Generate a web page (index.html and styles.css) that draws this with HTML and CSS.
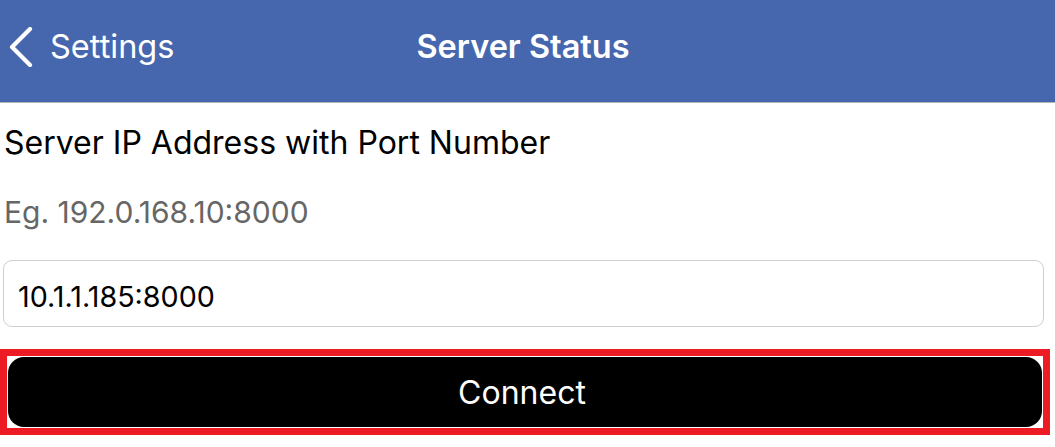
FILE: index.html
```html
<!DOCTYPE html>
<html>
<head>
<meta charset="utf-8">
<link rel="stylesheet" href="styles.css">
</head>
<body>
<header class="navbar">
  <div class="nav-back">
    <svg class="chev" width="26" height="40" viewBox="0 0 26 40"><path d="M22 2 L4 20 L22 38" fill="none" stroke="#fff" stroke-width="4.2" stroke-linecap="round" stroke-linejoin="round"/></svg>
    <span class="back-label">Settings</span>
  </div>
  <div class="nav-title">Server Status</div>
</header>
<main class="content">
  <div class="label">Server IP Address with Port Number</div>
  <div class="hint">Eg. 192.0.168.10:8000</div>
  <div class="field">10.1.1.185:8000</div>
  <div class="highlight">
    <button class="connect">Connect</button>
  </div>
</main>
</body>
</html>
```
FILE: styles.css
```css
html, body {
  margin: 0;
  padding: 0;
  background: #fff;
  font-family: Inter, "Noto Sans", "Liberation Sans", sans-serif;
}
.navbar {
  position: relative;
  height: 102px;
  background: #4666ad;
  border-bottom: 1px solid #b5b5b5;
  display: flex;
  align-items: center;
  justify-content: center;
}
.nav-back {
  position: absolute;
  left: 8px;
  top: 0;
  bottom: 9px;
  display: flex;
  align-items: center;
  color: #fff;
}
.chev {
  display: block;
  margin-right: 16px;
}
.back-label {
  font-size: 32.5px;
  font-weight: 400;
}
.nav-title {
  color: #fff;
  font-size: 32.5px;
  font-weight: 600;
  margin-bottom: 9px;
  margin-right: 9px;
}
.label {
  margin: 20px 0 0 4px;
  font-size: 32px;
  color: #000;
  line-height: 40px;
}
.hint {
  margin: 31px 0 0 4px;
  font-size: 30px;
  color: #666;
  line-height: 36px;
}
.field {
  margin: 30px 11px 0 3px;
  border: 1px solid #cfcfcf;
  border-radius: 9px;
  box-sizing: border-box;
  height: 67px;
  display: flex;
  align-items: center;
  padding: 6px 0 0 14px;
  font-size: 28.7px;
  color: #000;
}
.highlight {
  margin-top: 22px;
  width: 1050px;
  box-sizing: border-box;
  border: 7px solid #ed1c24;
  padding: 1px;
}
.connect {
  display: block;
  width: 100%;
  height: 70px;
  background: #000;
  color: #fff;
  border: none;
  border-radius: 16px;
  font-family: Inter, "Noto Sans", "Liberation Sans", sans-serif;
  font-size: 32px;
  font-weight: 400;
  padding: 0 6px 0 0;
}
```
